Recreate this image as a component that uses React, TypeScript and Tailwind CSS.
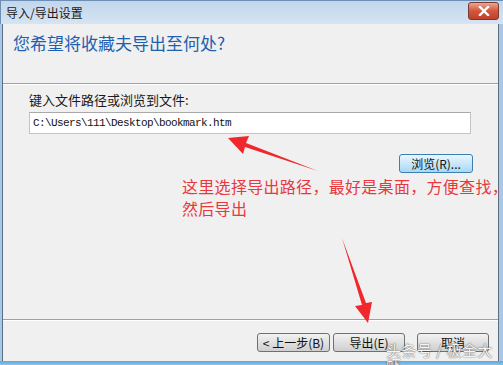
import React from "react";

const cjk = { fontFamily: '"Noto Sans CJK SC", "Noto Sans", sans-serif' };

function WinButton({ label, focused = false, className = "" }: { label: string; focused?: boolean; className?: string }) {
  return (
    <button
      className={
        "h-[19px] rounded-[3px] border text-[12px] leading-none text-[#111] flex items-center justify-center " +
        (focused
          ? "border-[#3c7fb1] bg-gradient-to-b from-[#eaf6fd] to-[#a7d9f5] "
          : "border-[#707070] bg-gradient-to-b from-[#f2f2f2] to-[#cfcfcf] ") +
        className
      }
      style={cjk}
    >
      {label}
    </button>
  );
}

export default function App() {
  return (
    <div className="relative w-[503px] h-[365px] overflow-hidden bg-[#a9c7e6]" style={cjk}>
      {/* title bar */}
      <div className="h-[24px] flex items-center justify-between pl-[5px] pr-[4px] bg-gradient-to-b from-[#c2d6ec] to-[#d6e4f3] border-t border-l border-[#6e8fb4]">
        <span className="text-[12px] text-[#1a1a1a]">导入/导出设置</span>
        <div className="w-[31px] h-[18px] mt-[-3px] rounded-[3px] border border-[#7a3a2e] bg-gradient-to-b from-[#e8a593] via-[#d2553c] to-[#c0412a] flex items-center justify-center">
          <svg width="12" height="10" viewBox="0 0 12 10">
            <path d="M2 1 L10 9 M10 1 L2 9" stroke="#ffffff" strokeWidth="2.4" strokeLinecap="square" />
          </svg>
        </div>
      </div>

      {/* body */}
      <div className="ml-[2px] mr-[4px] h-[337px] flex flex-col bg-[#f0f0f0] border-l border-r border-[#5b6e82]">
        <div className="h-[59px] pl-[10px] pt-[4px]">
          <div className="text-[17px] text-[#1f5fae] leading-[30px]">您希望将收藏夫导出至何处?</div>
        </div>
        <div className="border-t border-[#a0a0a0] border-b border-b-white" />

        <div className="h-[234px] pl-[26px] pr-[27px] pt-[6px] flex flex-col">
          <div className="text-[13px] text-[#1a1a1a] leading-[17px]">键入文件路径或浏览到文件:</div>
          <div className="mt-[4px] h-[22px] bg-white border border-[#c4c4c4] border-t-[#a9a9a9] flex items-center pl-[3px]">
            <span className="text-[11px] tracking-[-0.6px] text-[#111]" style={{ fontFamily: '"Liberation Mono", monospace' }}>
              C:\Users\111\Desktop\bookmark.htm
            </span>
          </div>
          <div className="mt-[20px] flex justify-end">
            <WinButton label="浏览(R)..." focused className="w-[74px] mr-[-2px]" />
          </div>
          <div className="mt-[2px] ml-[153px] mr-[-30px] text-[16px] leading-[22px] tracking-[0.3px] text-[#e8383d] whitespace-nowrap">
            这里选择导出路径，最好是桌面，方便查找，
            <br />
            然后导出
          </div>
        </div>

        <div className="border-t border-[#a0a0a0] border-b border-b-white" />
        <div className="flex-1 flex items-start pt-[12px] pl-[254px]">
          <WinButton label="< 上一步(B)" className="w-[73px]" />
          <WinButton label="导出(E)" className="w-[72px] ml-[3px]" />
          <WinButton label="取消" className="w-[72px] ml-[12px]" />
        </div>
      </div>
      <div className="h-[4px] bg-gradient-to-b from-[#5aa7dc] to-[#8cc3e8]" />

      {/* red annotation arrows */}
      <svg className="absolute left-0 top-0 pointer-events-none" width="503" height="365">
        <path d="M318 171 L246 143 L249 136 L228 138 L243 154 L245 147 Z" fill="#f0282d" />
        <path d="M342 238 L362 305 L355 306 L368 323 L372 302 L366 303 Z" fill="#f0282d" />
      </svg>

      {/* watermark */}
      <div
        className="absolute left-[386px] top-[342px] text-[15px] leading-none text-[#f4f4f4] tracking-[0.5px] pointer-events-none"
        style={{ textShadow: "0 0 1px rgba(0,0,0,0.6), 0 0 2px rgba(0,0,0,0.35)" }}
      >
        头条号 / 极金大虾
      </div>
    </div>
  );
}
